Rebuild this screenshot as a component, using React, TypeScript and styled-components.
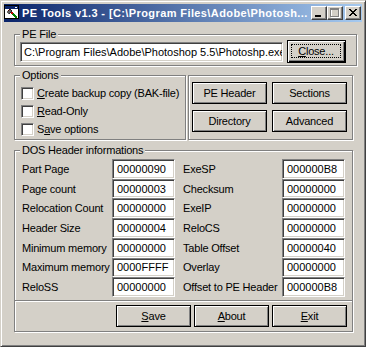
import React from 'react';
import styled, { createGlobalStyle, css } from 'styled-components';

const GlobalStyle = createGlobalStyle`
  *, *::before, *::after {
    box-sizing: border-box;
  }

  html,
  body {
    margin: 0;
    padding: 0;
    background: #d4d0c8;
  }

  body {
    font-family: 'Liberation Sans', Arial, sans-serif;
    font-size: 11px;
    color: #000;
  }
`;

const face = '#d4d0c8';

const raised = css`
  border: 1px solid #000;
  box-shadow: inset 1px 1px #fff, inset -1px -1px #808080;
  background: ${face};
`;

const sunken = css`
  border: 1px solid;
  border-color: #808080 #fff #fff #808080;
  box-shadow: inset 1px 1px #404040, inset -1px -1px ${face};
  background: #fff;
`;

const Window = styled.div`
  width: 366px;
  height: 347px;
  display: flex;
  flex-direction: column;
  padding: 3px;
  background: ${face};
  border: 1px solid;
  border-color: ${face} #404040 #404040 ${face};
  box-shadow: inset 1px 1px #fff, inset -1px -1px #808080;
`;

const TitleBar = styled.div`
  height: 18px;
  flex: none;
  display: flex;
  align-items: center;
  background: linear-gradient(to right, #0a246a, #a6caf0);
`;

const Title = styled.span`
  flex: 1;
  margin-left: 2px;
  color: #fff;
  font-weight: bold;
  letter-spacing: 0.4px;
  white-space: nowrap;
`;

const CaptionButtons = styled.div`
  display: flex;
  margin-right: 1px;
`;

const CaptionButton = styled.div<{ $gap?: boolean }>`
  width: 16px;
  height: 14px;
  margin-left: ${({ $gap }) => ($gap ? '2px' : '0')};
  border: 1px solid;
  border-color: #fff #404040 #404040 #fff;
  box-shadow: inset -1px -1px #808080;
  background: ${face};

  svg {
    display: block;
  }
`;

const Client = styled.div`
  flex: 1;
  display: flex;
  flex-direction: column;
  padding: 12px 9px 0 10px;
`;

const GroupBox = styled.div`
  position: relative;
  border: 1px solid #808080;
  box-shadow: inset 1px 1px #fff, 1px 1px #fff;
`;

const Legend = styled.span`
  position: absolute;
  top: -7px;
  left: 5px;
  padding: 0 2px;
  line-height: 13px;
  background: ${face};
  letter-spacing: -0.2px;
`;

const PathGroup = styled(GroupBox)`
  height: 32px;
  margin-right: -4px;
  padding: 3px 9px 0 5px;
  display: flex;
  align-items: center;
  gap: 4px;
`;

const TextField = styled.div<{ $width: number }>`
  ${sunken};
  width: ${({ $width }) => $width}px;
  height: 20px;
  padding: 0 3px;
  display: flex;
  align-items: center;
  white-space: nowrap;
  overflow: hidden;
`;

const PushButton = styled.div<{ $width?: number }>`
  ${raised};
  width: ${({ $width }) => $width ?? 75}px;
  height: 22px;
  display: flex;
  align-items: center;
  justify-content: center;
  letter-spacing: -0.2px;
`;

const DefaultButton = styled(PushButton)`
  height: 23px;
  margin-top: -1px;
  padding: 3px 4px 4px 3px;
  align-items: stretch;
  box-shadow: inset 1px 1px #fff, inset -1px -1px #000, inset -2px -2px #808080;
`;

const FocusRect = styled.span`
  flex: 1;
  display: flex;
  align-items: center;
  justify-content: center;
  outline: 1px dotted #000;
  outline-offset: -1px;
`;

const Accel = styled.u`
  text-decoration-thickness: 1px;
  text-underline-offset: 1px;
`;

const MiddleRow = styled.div`
  margin-top: 9px;
  display: flex;
  gap: 2px;
  height: 65px;
`;

const OptionsGroup = styled(GroupBox)`
  width: 172px;
  padding: 8px 0 0 6px;
`;

const CheckRow = styled.label`
  height: 18px;
  display: flex;
  align-items: center;
  gap: 3px;
  letter-spacing: -0.2px;
  white-space: nowrap;
`;

const CheckBox = styled.span`
  ${sunken};
  width: 13px;
  height: 13px;
  flex: none;
`;

const ActionGroup = styled(GroupBox)`
  width: 165px;
  padding: 6px 0 0 3px;
  display: grid;
  grid-template-columns: 75px 75px;
  grid-auto-rows: 22px;
  column-gap: 5px;
  row-gap: 6px;
`;

const HeaderGroup = styled(GroupBox)`
  margin-top: 10px;
`;

const FieldGrid = styled.div`
  height: 138px;
  margin: 8px 0 3px 7px;
  display: grid;
  grid-template-columns: 90px 63px 107px 63px;
  grid-template-rows: repeat(7, 1fr);
`;

const FieldLabel = styled.span<{ $indent?: boolean }>`
  display: flex;
  align-items: center;
  padding-left: ${({ $indent }) => ($indent ? '8px' : '0')};
  letter-spacing: -0.2px;
  white-space: nowrap;
`;

const HexField = styled.div`
  ${sunken};
  height: 100%;
  padding: 0 4px;
  display: flex;
  align-items: center;
`;

const Separator = styled.div`
  height: 2px;
  border-top: 1px solid #808080;
  border-bottom: 1px solid #fff;
`;

const ButtonBar = styled.div`
  display: flex;
  justify-content: flex-end;
  gap: 3px;
  padding: 3px 5px 4px 0;
`;

const AppIcon = () => (
  <svg width="16" height="16" viewBox="0 0 16 16" shapeRendering="crispEdges">
    <rect x="0.5" y="0.5" width="14" height="13" fill="#fff" stroke="#000" />
    <rect x="1" y="1" width="13" height="3" fill="#0a246a" />
    <rect x="11" y="2" width="2" height="1" fill="#fff" />
    <path d="M5 5 L12 12" stroke="#c00000" strokeWidth="2" />
    <path d="M9 9 L13 13" stroke="#008000" strokeWidth="2" />
    <path d="M3 7 L6 4 L8 6 L5 9 Z" fill="#606060" stroke="#000" strokeWidth="0.6" />
  </svg>
);

const MinimizeGlyph = () => (
  <svg width="14" height="12" viewBox="0 0 14 12" shapeRendering="crispEdges">
    <rect x="3" y="8" width="6" height="2" fill="#000" />
  </svg>
);

const MaximizeGlyph = () => (
  <svg width="14" height="12" viewBox="0 0 14 12" shapeRendering="crispEdges">
    <g fill="none" stroke="#fff">
      <rect x="3.5" y="2.5" width="8" height="8" />
    </g>
    <g fill="none" stroke="#808080">
      <rect x="2.5" y="1.5" width="8" height="8" />
      <path d="M2 2.5 H11" />
    </g>
  </svg>
);

const CloseGlyph = () => (
  <svg width="14" height="12" viewBox="0 0 14 12" shapeRendering="crispEdges">
    <path
      d="M3 2h2v1h1v1h2v-1h1v-1h2v1h-1v1h-1v1h-1v1h1v1h1v1h1v1h-2v-1h-1v-1h-2v1h-1v1h-2v-1h1v-1h1v-1h1v-1h-1v-1h-1v-1h-1z"
      fill="#000"
    />
  </svg>
);

const dosFields: [string, string, string, string][] = [
  ['Part Page', '00000090', 'ExeSP', '000000B8'],
  ['Page count', '00000003', 'Checksum', '00000000'],
  ['Relocation Count', '00000000', 'ExeIP', '00000000'],
  ['Header Size', '00000004', 'ReloCS', '00000000'],
  ['Minimum memory', '00000000', 'Table Offset', '00000040'],
  ['Maximum memory', '0000FFFF', 'Overlay', '00000000'],
  ['ReloSS', '00000000', 'Offset to PE Header', '000000B8'],
];

export default function App() {
  return (
    <>
      <GlobalStyle />
      <Window>
        <TitleBar>
          <AppIcon />
          <Title>PE Tools v1.3 - [C:\Program Files\Adobe\Photosh...</Title>
          <CaptionButtons>
            <CaptionButton>
              <MinimizeGlyph />
            </CaptionButton>
            <CaptionButton>
              <MaximizeGlyph />
            </CaptionButton>
            <CaptionButton $gap>
              <CloseGlyph />
            </CaptionButton>
          </CaptionButtons>
        </TitleBar>

        <Client>
          <PathGroup>
            <Legend>PE File</Legend>
            <TextField $width={263}>C:\Program Files\Adobe\Photoshop 5.5\Photoshp.exe</TextField>
            <DefaultButton $width={59}>
              <FocusRect>
                <span>
                  <Accel>C</Accel>lose...
                </span>
              </FocusRect>
            </DefaultButton>
          </PathGroup>

          <MiddleRow>
            <OptionsGroup>
              <Legend>Options</Legend>
              <CheckRow>
                <CheckBox />
                <span>
                  <Accel>C</Accel>reate backup copy (BAK-file)
                </span>
              </CheckRow>
              <CheckRow>
                <CheckBox />
                <span>
                  <Accel>R</Accel>ead-Only
                </span>
              </CheckRow>
              <CheckRow>
                <CheckBox />
                <span>
                  S<Accel>a</Accel>ve options
                </span>
              </CheckRow>
            </OptionsGroup>

            <ActionGroup>
              <PushButton>PE Header</PushButton>
              <PushButton>Sections</PushButton>
              <PushButton>Directory</PushButton>
              <PushButton>Advanced</PushButton>
            </ActionGroup>
          </MiddleRow>

          <HeaderGroup>
            <Legend>DOS Header informations</Legend>
            <FieldGrid>
              {dosFields.map(([l1, v1, l2, v2]) => (
                <React.Fragment key={l1}>
                  <FieldLabel>{l1}</FieldLabel>
                  <HexField>{v1}</HexField>
                  <FieldLabel $indent>{l2}</FieldLabel>
                  <HexField>{v2}</HexField>
                </React.Fragment>
              ))}
            </FieldGrid>
            <Separator />
            <ButtonBar>
              <PushButton>
                <span>
                  <Accel>S</Accel>ave
                </span>
              </PushButton>
              <PushButton>
                <span>
                  <Accel>A</Accel>bout
                </span>
              </PushButton>
              <PushButton>
                <span>
                  <Accel>E</Accel>xit
                </span>
              </PushButton>
            </ButtonBar>
          </HeaderGroup>
        </Client>
      </Window>
    </>
  );
}
